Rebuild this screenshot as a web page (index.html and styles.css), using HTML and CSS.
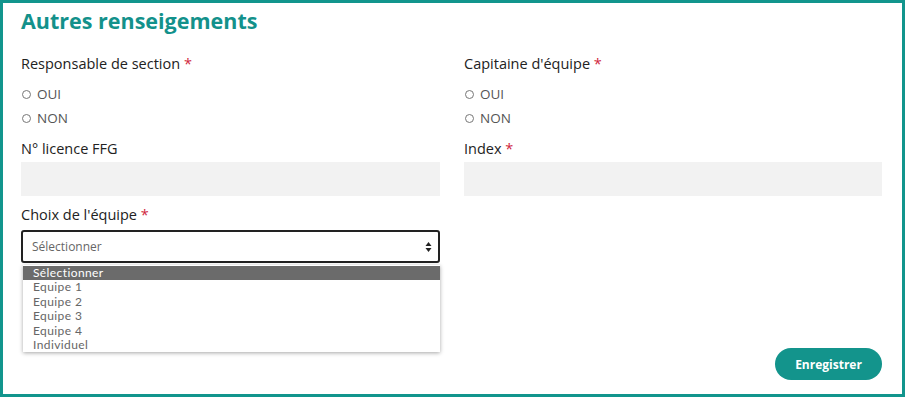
FILE: index.html
```html
<!DOCTYPE html>
<html>
<head>
  <title>Autres renseignements</title>
  <link rel="stylesheet" href="styles.css">
</head>
<body>
  <div class="page">
    <h2 class="titre">Autres renseigements</h2>

    <div class="grille">
      <div class="champ">
        <div class="label">Responsable de section <span class="req">*</span></div>
        <label class="radio"><span class="rond"></span>OUI</label>
        <label class="radio"><span class="rond"></span>NON</label>
      </div>
      <div class="champ">
        <div class="label">Capitaine d'équipe <span class="req">*</span></div>
        <label class="radio"><span class="rond"></span>OUI</label>
        <label class="radio"><span class="rond"></span>NON</label>
      </div>

      <div class="champ">
        <div class="label label-bas">N° licence FFG</div>
        <div class="input"></div>
      </div>
      <div class="champ">
        <div class="label label-bas">Index <span class="req">*</span></div>
        <div class="input"></div>
      </div>

      <div class="champ">
        <div class="label label-bas">Choix de l'équipe <span class="req">*</span></div>
        <div class="select-zone">
          <div class="select">
            <span>Sélectionner</span>
            <svg class="fleches" width="7" height="12" viewBox="0 0 7 12">
              <path d="M3.5 1 L6.5 5 L0.5 5 Z" fill="#222"/>
              <path d="M3.5 11 L6.5 7 L0.5 7 Z" fill="#222"/>
            </svg>
          </div>
          <ul class="liste">
            <li class="actif">Sélectionner</li>
            <li>Equipe 1</li>
            <li>Equipe 2</li>
            <li>Equipe 3</li>
            <li>Equipe 4</li>
            <li>Individuel</li>
          </ul>
        </div>
      </div>
      <div class="champ"></div>
    </div>

    <div class="actions">
      <button class="bouton">Enregistrer</button>
    </div>
  </div>
</body>
</html>
```

FILE: styles.css
```css
body {
  margin: 0;
  font-family: "Open Sans", sans-serif;
  background-color: #fff;
}

.page {
  box-sizing: border-box;
  width: 905px;
  height: 397px;
  border: 3px solid #12958d;
  padding: 5px 20px 0 18px;
}

.titre {
  margin: 0;
  font-size: 21.5px;
  line-height: 26px;
  font-weight: bold;
  color: #13918b;
}

.grille {
  display: grid;
  grid-template-columns: 419px 418px;
  column-gap: 24px;
  margin-top: 20px;
}

.label {
  font-size: 14.5px;
  line-height: 20px;
  color: #222;
}

.label-bas {
  margin-top: 9px;
}

.req {
  color: #d0263c;
}

.radio {
  display: flex;
  align-items: center;
  height: 24px;
  font-size: 13.5px;
  color: #555;
}

.radio:first-of-type {
  margin-top: 8px;
}

.rond {
  box-sizing: border-box;
  width: 9px;
  height: 9px;
  border: 1px solid #777;
  border-radius: 50%;
  margin: 0 6px 0 1px;
}

.input {
  margin-top: 3px;
  height: 34px;
  background-color: #f2f2f2;
}

.select-zone {
  position: relative;
  margin-top: 5px;
}

.select {
  box-sizing: border-box;
  height: 33px;
  border: 2px solid #222;
  border-radius: 3px;
  display: flex;
  align-items: center;
  justify-content: space-between;
  padding: 0 6px 0 9px;
  font-size: 12px;
  color: #666;
}

.liste {
  position: absolute;
  top: 35px;
  left: 2px;
  right: 0;
  margin: 0;
  padding: 1px 0 0;
  list-style: none;
  background-color: #fff;
  box-shadow: 0 1px 4px rgba(0, 0, 0, 0.35);
  font-family: Lato, sans-serif;
  font-size: 12px;
  letter-spacing: 0.4px;
  line-height: 14.4px;
  color: #666;
}

.liste li {
  padding-left: 10px;
}

.liste .actif {
  background-color: #6b6b6b;
  color: #fff;
}

.actions {
  display: flex;
  justify-content: flex-end;
  margin-top: 85px;
}

.bouton {
  width: 107px;
  height: 32px;
  border: none;
  border-radius: 16px;
  background-color: #13948c;
  color: #fff;
  font-family: "Open Sans", sans-serif;
  font-size: 12px;
  font-weight: bold;
}
```
